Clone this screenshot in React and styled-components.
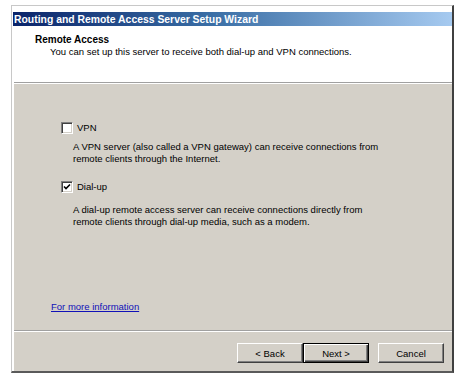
import styled, { createGlobalStyle } from 'styled-components'

const GlobalStyle = createGlobalStyle`
  html, body {
    margin: 0;
    padding: 0;
    background: #ffffff;
  }
  body {
    font-family: "Liberation Sans", Arial, sans-serif;
    font-size: 9.5px;
    color: #000;
  }
`

const Page = styled.div`
  width: 462px;
  height: 379px;
  padding: 5px 0 0 11px;
  box-sizing: border-box;
`

const Window = styled.div`
  width: 443px;
  height: 368px;
  box-sizing: border-box;
  display: flex;
  flex-direction: column;
  background: #ffffff;
  border-top: 1px solid #c8c8c8;
  border-left: 1px solid #c8c8c8;
  border-right: 2px solid #404040;
  border-bottom: 2px solid #5a5a5a;
  padding: 6px 0 0 1px;
`

const Inner = styled.div`
  flex: 1;
  display: flex;
  flex-direction: column;
  background: #d4d0c8;
  border-left: 1px solid #ffffff;
`

const TitleBar = styled.div`
  height: 14px;
  display: flex;
  align-items: center;
  padding-left: 1px;
  background: linear-gradient(to right, #0a246a 0%, #3a6ea5 45%, #a6caf0 100%);
  color: #ffffff;
  font-weight: bold;
  font-size: 10.4px;
  white-space: nowrap;
`

const Header = styled.div`
  height: 57px;
  flex: none;
  box-sizing: border-box;
  background: #ffffff;
  padding: 8px 0 0 21px;
  border-bottom: 1px solid #a0a0a0;
  box-shadow: 0 1px 0 #ffffff;
  margin-bottom: 1px;
`

const HeaderTitle = styled.div`
  font-weight: bold;
  font-size: 10px;
  line-height: 12px;
`

const HeaderText = styled.div`
  padding-left: 15px;
  line-height: 12px;
`

const Body = styled.div`
  flex: 1;
  display: flex;
  flex-direction: column;
  padding: 37px 0 17px 0;
  border-bottom: 1px solid #a0a0a0;
  box-shadow: 0 1px 0 #ffffff;
`

const Options = styled.div`
  padding-left: 47px;
  display: flex;
  flex-direction: column;
`

const OptionRow = styled.label`
  display: flex;
  align-items: center;
  gap: 4px;
  height: 13px;
  margin-top: ${({ $top }) => $top}px;
`

const CheckBox = styled.span`
  width: 12px;
  height: 12px;
  box-sizing: border-box;
  background: #ffffff;
  border-top: 1px solid #808080;
  border-left: 1px solid #808080;
  border-right: 1px solid #ffffff;
  border-bottom: 1px solid #ffffff;
  box-shadow: inset 1px 1px 0 #404040, inset -1px -1px 0 #d4d0c8;
  display: flex;
  align-items: center;
  justify-content: center;
`

const Description = styled.div`
  margin: ${({ $top }) => $top}px 0 0 12px;
  line-height: 11.5px;
`

const MoreLink = styled.a`
  margin-top: auto;
  margin-left: 37px;
  color: #1010b8;
  text-decoration: underline;
  line-height: 12px;
  align-self: flex-start;
`

const Footer = styled.div`
  flex: none;
  height: 39px;
  box-sizing: border-box;
  display: flex;
  justify-content: flex-end;
  align-items: flex-start;
  padding: 11px 8px 0 0;
  margin-top: 1px;
`

const Button = styled.div`
  width: 66px;
  height: 20px;
  box-sizing: border-box;
  display: flex;
  align-items: center;
  justify-content: center;
  background: #d4d0c8;
  margin-left: ${({ $gap }) => $gap || 0}px;
  border-top: 1px solid #ffffff;
  border-left: 1px solid #ffffff;
  border-right: 1px solid #404040;
  border-bottom: 1px solid #404040;
  box-shadow: inset -1px -1px 0 #808080;
  ${({ $default }) =>
    $default &&
    `
    border: 1px solid #000000;
    box-shadow: inset 1px 1px 0 #ffffff, inset -1px -1px 0 #404040, inset -2px -2px 0 #808080;
  `}
`

const Check = () => (
  <svg width="8" height="8" viewBox="0 0 8 8">
    <path d="M1 3.5 L3 5.5 L7 1.5" stroke="#000" strokeWidth="1.6" fill="none" />
  </svg>
)

export default function App() {
  return (
    <>
      <GlobalStyle />
      <Page>
        <Window>
          <TitleBar>Routing and Remote Access Server Setup Wizard</TitleBar>
          <Inner>
            <Header>
              <HeaderTitle>Remote Access</HeaderTitle>
              <HeaderText>
                You can set up this server to receive both dial-up and VPN connections.
              </HeaderText>
            </Header>
            <Body>
              <Options>
                <OptionRow $top={0}>
                  <CheckBox />
                  VPN
                </OptionRow>
                <Description $top={7}>
                  A VPN server (also called a VPN gateway) can receive connections from
                  <br />
                  remote clients through the Internet.
                </Description>
                <OptionRow $top={16}>
                  <CheckBox>
                    <Check />
                  </CheckBox>
                  Dial-up
                </OptionRow>
                <Description $top={11}>
                  A dial-up remote access server can receive connections directly from
                  <br />
                  remote clients through dial-up media, such as a modem.
                </Description>
              </Options>
              <MoreLink href="#">For more information</MoreLink>
            </Body>
            <Footer>
              <Button>&lt; Back</Button>
              <Button $default>Next &gt;</Button>
              <Button $gap={9}>Cancel</Button>
            </Footer>
          </Inner>
        </Window>
      </Page>
    </>
  )
}
